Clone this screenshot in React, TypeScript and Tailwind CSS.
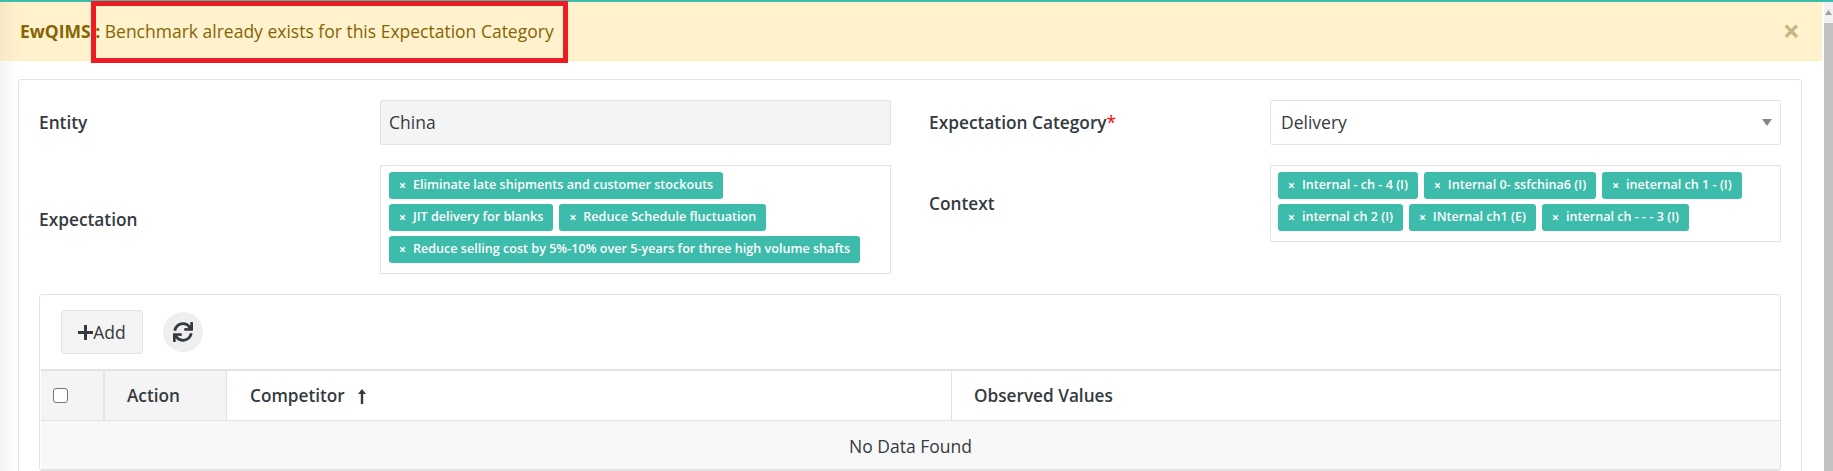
import { FaSync } from 'react-icons/fa';

const OPEN_SANS = "font-['Open_Sans',sans-serif]";

const Chip = ({ label }: { label: string }) => (
  <span className="flex h-[27px] items-center gap-[7px] rounded-[3px] bg-[#3dbbab] px-[10px] text-[12.6px] font-semibold whitespace-nowrap text-white">
    <span className="text-[12px] font-bold">×</span>
    {label}
  </span>
);

const FieldLabel = ({ children }: { children: React.ReactNode }) => (
  <div className="text-[17.3px] font-semibold text-[#343a40]">{children}</div>
);

const expectations = [
  'Eliminate late shipments and customer stockouts',
  'JIT delivery for blanks',
  'Reduce Schedule fluctuation',
  'Reduce selling cost by 5%-10% over 5-years for three high volume shafts',
];

const contexts = [
  'Internal - ch - 4 (I)',
  'Internal 0- ssfchina6 (I)',
  'ineternal ch 1 - (I)',
  'internal ch 2 (I)',
  'INternal ch1 (E)',
  'internal ch - - - 3 (I)',
];

const App = () => {
  return (
    <div className={`${OPEN_SANS} flex h-[471px] flex-col overflow-hidden bg-white text-[17.5px] text-[#343a40]`}>
      <div className="h-[2px] shrink-0 bg-[#3dbbab]" />
      <div className="flex min-h-0 flex-1">
        <div className="flex min-w-0 flex-1 flex-col">
          <div className="relative mr-[2px] flex h-[59px] shrink-0 items-center justify-between border-b border-[#ffeeba] bg-[linear-gradient(90deg,#f8e9c6,#fff2cd_22px)] pr-[22px] pl-[20px] text-[#856404]">
            <div className="whitespace-nowrap">
              <span className="font-bold">EwQIMS</span>
              <span className="font-bold"> : </span>
              <span>Benchmark already exists for this Expectation Category</span>
            </div>
            <span className="text-[30px] leading-none font-bold text-[#c5b783]">×</span>
            <div className="absolute top-[-1px] left-[91px] h-[62px] w-[477px] border-[5px] border-[#ed1c24]" />
          </div>
          <div className="min-h-0 flex-1 bg-[linear-gradient(90deg,#f4f4f4,#ffffff_18px)] pt-[18px] pr-[22px] pl-[18px]">
            <div className="h-[400px] rounded-[3px] border border-[#e3e3e3] bg-white px-[20px] pt-[20px]">
              <div className="grid grid-cols-[341px_511px_38px_341px_511px] items-center gap-y-[20px]">
                <FieldLabel>Entity</FieldLabel>
                <div className="flex h-[45px] items-center rounded-[2px] border border-[#e3e3e3] bg-[#f4f4f4] px-[8px]">China</div>
                <div />
                <FieldLabel>
                  Expectation Category<span className="font-normal text-[#f00]">*</span>
                </FieldLabel>
                <div className="flex h-[45px] items-center justify-between rounded-[2px] border border-[#e3e3e3] bg-white pr-[8px] pl-[10px]">
                  <span>Delivery</span>
                  <svg width="10" height="7" viewBox="0 0 10 7">
                    <path d="M0 0h10L5 7z" fill="#888" />
                  </svg>
                </div>
                <FieldLabel>Expectation</FieldLabel>
                <div className="flex flex-wrap gap-x-[6px] gap-y-[5px] self-start border border-[#e3e3e3] px-[8px] pt-[6px] pb-[10px]">
                  {expectations.map((item) => (
                    <Chip key={item} label={item} />
                  ))}
                </div>
                <div />
                <FieldLabel>
                  <span className="relative top-[-16px]">Context</span>
                </FieldLabel>
                <div className="flex flex-wrap gap-x-[6px] gap-y-[5px] self-start border border-[#e3e3e3] px-[7px] pt-[6px] pb-[10px]">
                  {contexts.map((item) => (
                    <Chip key={item} label={item} />
                  ))}
                </div>
              </div>
              <div className="mt-[20px] rounded-[3px] border border-[#e3e3e3]">
                <div className="flex h-[74px] items-start gap-[20px] pt-[15px] pl-[21px]">
                  <button className="flex h-[44px] w-[82px] items-center justify-center rounded-[3px] border border-[#e3e3e3] bg-[#f4f4f4]">
                    <svg width="15" height="15" viewBox="0 0 15 15" fill="#343a40">
                      <path d="M6 0h3v6h6v3H9v6H6V9H0V6h6z" />
                    </svg>
                    Add
                  </button>
                  <button className="mt-[2px] flex h-[40px] w-[40px] items-center justify-center rounded-full bg-[#efefef]">
                    <FaSync className="h-[20px] w-[20px] text-[#343a40]" />
                  </button>
                </div>
                <div className="ml-[1px] grid grid-cols-[64px_122px_725px_1fr] border-t-2 border-[#e3e3e3] text-[17.2px] font-semibold">
                  <div className="flex h-[50px] items-center border-r-2 border-b border-[#e3e3e3] bg-[#f4f4f4] pl-[12px]">
                    <span className="h-[15px] w-[15px] rounded-[3px] border border-[#767676] bg-white" />
                  </div>
                  <div className="flex items-center justify-start border-r border-b border-[#e3e3e3] bg-[#f4f4f4] pt-[1px] pl-[22px]">Action</div>
                  <div className="flex items-center gap-[12px] border-r border-b border-[#e3e3e3] pt-[1px] pl-[23px]">
                    Competitor
                    <svg width="10" height="15" viewBox="0 0 10 15" fill="#343a40">
                      <path d="M5 0l4 5H6.200v10H3.800V5H1z" />
                    </svg>
                  </div>
                  <div className="flex items-center border-b border-[#e3e3e3] pt-[1px] pl-[22px]">Observed Values</div>
                  <div className="col-span-4 flex h-[49px] items-center justify-center border-b border-[#e3e3e3] bg-[#f8f8f8] pt-[3px] text-[17.5px] font-normal">No Data Found</div>
                </div>
              </div>
            </div>
          </div>
        </div>
        <div className="flex w-[9px] shrink-0 flex-col bg-[#f1f1f1]">
          <div className="flex h-[21px] items-start justify-center pt-[8px]">
            <svg width="7" height="5" viewBox="0 0 7 5">
              <path d="M3.500 0L7 5H0z" fill="#a0a0a0" />
            </svg>
          </div>
          <div className="flex-1 bg-[#c1c1c1]" />
        </div>
      </div>
    </div>
  );
};

export default App;
